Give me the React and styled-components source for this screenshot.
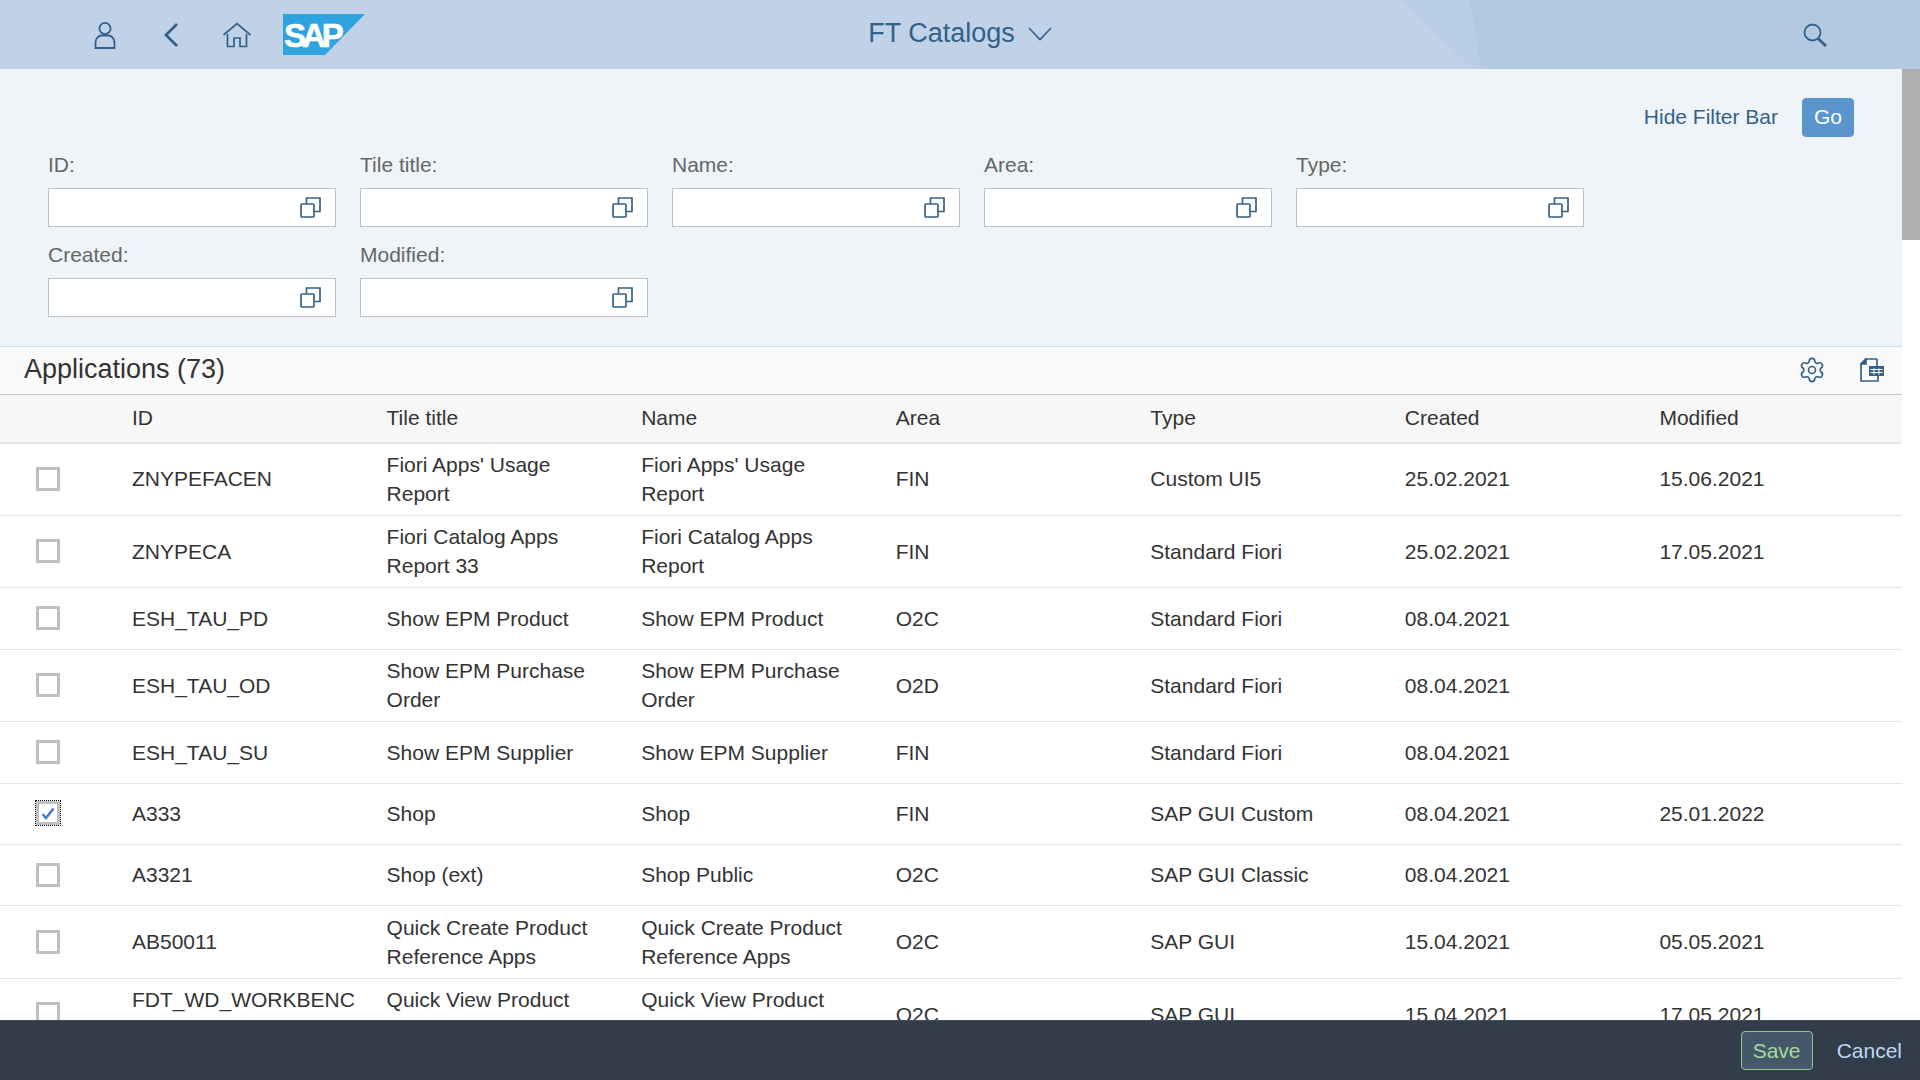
import React from 'react';
import styled, { createGlobalStyle } from 'styled-components';
import { Settings } from 'lucide-react';

const GlobalStyle = createGlobalStyle`
  html, body { margin: 0; padding: 0; height: 100%; overflow: hidden; }
  body { font-family: "Liberation Sans", Arial, sans-serif; font-size: 21px; color: #333; background: #fff; }
`;

const Page = styled.div`
  height: 100vh;
  display: flex;
  flex-direction: column;
`;

const Header = styled.header`
  position: relative;
  height: 69px;
  flex: none;
  background: linear-gradient(90deg, #bfd2e8 0%, #bfd2e8 70%, #bed1e7 100%);
  display: grid;
  grid-template-columns: 1fr auto 1fr;
  align-items: center;
  overflow: hidden;

  &::before {
    content: '';
    position: absolute;
    inset: 0;
    background: #b9cde5;
    clip-path: polygon(1402px 0, 1473px 100%, 1481px 100%, 1470px 0);
  }
  &::after {
    content: '';
    position: absolute;
    inset: 0;
    background: #b3c9e2;
    clip-path: polygon(1470px 0, 1481px 100%, 100% 100%, 100% 0);
  }
`;

const HeaderLeft = styled.div`
  position: relative;
  z-index: 1;
  display: flex;
  align-items: center;
  padding-left: 94px;
  height: 100%;
`;

const HeaderCenter = styled.div`
  position: relative;
  z-index: 1;
  display: flex;
  align-items: center;
  gap: 13px;
  color: #346187;
  font-size: 27px;
  margin-top: -2px;
`;

const HeaderRight = styled.div`
  position: relative;
  z-index: 1;
  display: flex;
  justify-content: flex-end;
  padding-right: 93px;
`;

const NavIcon = styled.svg`
  display: block;
  flex: none;
  margin-left: ${p => p.$gap || 0}px;
  fill: none;
  stroke: #346187;
`;

const Middle = styled.div`
  flex: 1;
  min-height: 0;
  display: flex;
  overflow: hidden;
`;

const Content = styled.main`
  flex: 1;
  min-width: 0;
  overflow: hidden;
`;

const ScrollTrack = styled.div`
  width: 18px;
  flex: none;
  background: #fff;
`;

const ScrollThumb = styled.div`
  height: 171px;
  background: #afafaf;
`;

const FilterBar = styled.section`
  background: #eff4f9;
  padding: 29px 48px 29px;
  height: 277px;
  box-sizing: border-box;
`;

const FilterActions = styled.div`
  display: flex;
  justify-content: flex-end;
  align-items: center;
  gap: 24px;
  height: 39px;
`;

const HideLink = styled.a`
  color: #346187;
  margin-top: -2px;
`;

const GoButton = styled.button`
  width: 52px;
  height: 39px;
  padding: 0 0 2px;
  border: 1px solid #5a96cd;
  border-radius: 4px;
  background: #5a96cd;
  color: #fff;
  font: inherit;
`;

const FilterGrid = styled.div`
  display: grid;
  grid-template-columns: repeat(5, 288px);
  column-gap: 24px;
  row-gap: 13px;
  margin-top: 13px;
`;

const FieldLabel = styled.label`
  display: block;
  line-height: 30px;
  margin-bottom: 8px;
  color: #666;
`;

const InputBox = styled.div`
  height: 39px;
  box-sizing: border-box;
  border: 1px solid #bfc1c4;
  background: #fff;
  display: flex;
  align-items: center;
  justify-content: flex-end;
  padding-right: 14px;
`;

const TitleBar = styled.div`
  height: 49px;
  box-sizing: border-box;
  background: #fafafa;
  border-top: 1px solid #cfdeef;
  border-bottom: 1px solid #c9c9c9;
  display: flex;
  align-items: center;
  justify-content: space-between;
  padding: 0 18px 0 24px;
`;

const TableTitle = styled.h2`
  margin: -3px 0 0;
  font-size: 27px;
  font-weight: 400;
  color: #333;
`;

const TitleTools = styled.div`
  display: flex;
  align-items: center;
  gap: 34px;
  margin-top: -1px;
  color: #346187;
`;

const HeadRow = styled.div`
  display: grid;
  grid-template-columns: 120px repeat(7, 1fr);
  align-items: center;
  height: 48.6px;
  box-sizing: border-box;
  padding-bottom: 2px;
  background: #f7f7f7;
  border-bottom: 2px solid #e5e5e5;
`;

const Row = styled.div`
  display: grid;
  grid-template-columns: 120px repeat(7, 1fr);
  align-items: center;
  min-height: 61.4px;
  box-sizing: border-box;
  padding: 6.4px 0 7px;
  border-bottom: 1px solid #e5e5e5;
  background: #fff;
`;

const Cell = styled.div`
  padding: 0 12px;
  line-height: 29px;
  color: #333;
  overflow-wrap: anywhere;
`;

const SelectCell = styled.div`
  padding-left: 36px;
`;

const Check = styled.span`
  display: flex;
  align-items: center;
  justify-content: center;
  width: 24px;
  height: 24px;
  box-sizing: border-box;
  border: 3px solid #bfbfbf;
  background: #fff;
  outline: ${p => (p.$checked ? '1px dotted #000' : 'none')};
`;

const Footer = styled.footer`
  height: 60px;
  flex: none;
  box-sizing: border-box;
  background: #323d49;
  border-top: 1px solid #3f5164;
  display: flex;
  align-items: center;
  justify-content: flex-end;
  gap: 24px;
  padding-right: 18px;
`;

const SaveButton = styled.button`
  width: 72px;
  height: 39px;
  padding: 0;
  border: 1px solid #8fc48d;
  border-radius: 4px;
  background: #455869;
  color: #a3d8a0;
  font: inherit;
`;

const CancelLink = styled.a`
  color: #bcd8f3;
`;

const LogoMark = styled.svg`
  display: block;
  flex: none;
  margin-left: 31px;
`;

const LogoText = styled.text`
  font-family: "Liberation Sans", Arial, sans-serif;
  font-weight: 700;
  font-size: 33px;
  letter-spacing: -4px;
  fill: #fff;
  stroke: #fff;
  stroke-width: 0.6px;
`;

const CheckSvg = styled.svg`
  display: block;
`;

const filters = ['ID', 'Tile title', 'Name', 'Area', 'Type', 'Created', 'Modified'];

const rows = [
  { id: 'ZNYPEFACEN', title: "Fiori Apps' Usage Report", name: "Fiori Apps' Usage Report", area: 'FIN', type: 'Custom UI5', created: '25.02.2021', modified: '15.06.2021' },
  { id: 'ZNYPECA', title: 'Fiori Catalog Apps Report 33', name: 'Fiori Catalog Apps Report', area: 'FIN', type: 'Standard Fiori', created: '25.02.2021', modified: '17.05.2021' },
  { id: 'ESH_TAU_PD', title: 'Show EPM Product', name: 'Show EPM Product', area: 'O2C', type: 'Standard Fiori', created: '08.04.2021', modified: '' },
  { id: 'ESH_TAU_OD', title: 'Show EPM Purchase Order', name: 'Show EPM Purchase Order', area: 'O2D', type: 'Standard Fiori', created: '08.04.2021', modified: '' },
  { id: 'ESH_TAU_SU', title: 'Show EPM Supplier', name: 'Show EPM Supplier', area: 'FIN', type: 'Standard Fiori', created: '08.04.2021', modified: '' },
  { id: 'A333', title: 'Shop', name: 'Shop', area: 'FIN', type: 'SAP GUI Custom', created: '08.04.2021', modified: '25.01.2022', checked: true },
  { id: 'A3321', title: 'Shop (ext)', name: 'Shop Public', area: 'O2C', type: 'SAP GUI Classic', created: '08.04.2021', modified: '' },
  { id: 'AB50011', title: 'Quick Create Product Reference Apps', name: 'Quick Create Product Reference Apps', area: 'O2C', type: 'SAP GUI', created: '15.04.2021', modified: '05.05.2021' },
  { id: 'FDT_WD_WORKBENCH', title: 'Quick View Product Reference Apps', name: 'Quick View Product Reference Apps', area: 'O2C', type: 'SAP GUI', created: '15.04.2021', modified: '17.05.2021' },
];

function PersonIcon() {
  return (
    <NavIcon width="22" height="28" viewBox="0 0 22 28" strokeWidth="1.8">
      <circle cx="11" cy="7.5" r="5.6" />
      <path d="M1.5 27V21.5C1.5 17 5 14.5 7.5 14.5H14.5C17 14.5 20.5 17 20.5 21.5V27Z" />
    </NavIcon>
  );
}

function BackIcon() {
  return (
    <NavIcon $gap={47} width="16" height="26" viewBox="0 0 16 26" strokeWidth="2.8">
      <path d="M14 2L3 13L14 24" />
    </NavIcon>
  );
}

function HomeIcon() {
  return (
    <NavIcon $gap={43} width="30" height="26" viewBox="0 0 30 26" strokeWidth="1.7">
      <path d="M1.5 13L15 1.5L28.5 13" />
      <path d="M5.5 12V24.5H12V16H18V24.5H24.5V12" />
    </NavIcon>
  );
}

function SapLogo() {
  return (
    <LogoMark width="82" height="41" viewBox="0 0 82 41">
      <polygon points="0,0 82,0 42,41 0,41" fill="#2fa3e0" />
      <LogoText x="1" y="33">SAP</LogoText>
    </LogoMark>
  );
}

function ChevronDown() {
  return (
    <NavIcon width="24" height="14" viewBox="0 0 24 14" strokeWidth="1.6">
      <path d="M1 1L12 12.5L23 1" />
    </NavIcon>
  );
}

function SearchIcon() {
  return (
    <NavIcon width="24" height="24" viewBox="0 0 24 24" strokeWidth="1.8">
      <circle cx="9.5" cy="9.5" r="8" />
      <path d="M15 15.5L23 23" strokeWidth="2.8" />
    </NavIcon>
  );
}

function ValueHelpIcon() {
  return (
    <NavIcon width="21" height="21" viewBox="0 0 21 21" strokeWidth="1.7">
      <rect x="1" y="7" width="13" height="13" rx="1" />
      <path d="M6.5 6.5V1H20V14.5H14.5" />
    </NavIcon>
  );
}

function ExportIcon() {
  return (
    <NavIcon width="24" height="24" viewBox="0 0 24 24" strokeWidth="1.7">
      <path d="M17 1H6L1 6V23H18V18" />
      <path d="M1 6L6 1V6Z" fill="#346187" />
      <path d="M17 1V8" />
      <rect x="9" y="8" width="15" height="10" fill="#346187" strokeWidth="0" />
      <path d="M14 10.5V16.5M19 10.5V16.5M10.5 11.5H22.5M10.5 14.5H22.5" stroke="#fafafa" strokeWidth="1.1" />
    </NavIcon>
  );
}

function CheckMark() {
  return (
    <CheckSvg width="14" height="13" viewBox="0 0 14 13">
      <path d="M1.5 7L5 11L12.5 1.5" fill="none" stroke="#3f7fbd" strokeWidth="2.4" />
    </CheckSvg>
  );
}

function TableRow({ row }) {
  return (
    <Row>
      <SelectCell>
        <Check $checked={row.checked}>{row.checked && <CheckMark />}</Check>
      </SelectCell>
      <Cell>{row.id}</Cell>
      <Cell>{row.title}</Cell>
      <Cell>{row.name}</Cell>
      <Cell>{row.area}</Cell>
      <Cell>{row.type}</Cell>
      <Cell>{row.created}</Cell>
      <Cell>{row.modified}</Cell>
    </Row>
  );
}

export default function App() {
  return (
    <Page>
      <GlobalStyle />
      <Header>
        <HeaderLeft>
          <PersonIcon />
          <BackIcon />
          <HomeIcon />
          <SapLogo />
        </HeaderLeft>
        <HeaderCenter>
          FT Catalogs
          <ChevronDown />
        </HeaderCenter>
        <HeaderRight>
          <SearchIcon />
        </HeaderRight>
      </Header>
      <Middle>
        <Content>
          <FilterBar>
            <FilterActions>
              <HideLink>Hide Filter Bar</HideLink>
              <GoButton>Go</GoButton>
            </FilterActions>
            <FilterGrid>
              {filters.map(f => (
                <div key={f}>
                  <FieldLabel>{f}:</FieldLabel>
                  <InputBox>
                    <ValueHelpIcon />
                  </InputBox>
                </div>
              ))}
            </FilterGrid>
          </FilterBar>
          <TitleBar>
            <TableTitle>Applications (73)</TableTitle>
            <TitleTools>
              <Settings size={28} strokeWidth={1.4} />
              <ExportIcon />
            </TitleTools>
          </TitleBar>
          <HeadRow>
            <div />
            {filters.map(f => (
              <Cell key={f}>{f}</Cell>
            ))}
          </HeadRow>
          {rows.map(r => (
            <TableRow key={r.id} row={r} />
          ))}
        </Content>
        <ScrollTrack>
          <ScrollThumb />
        </ScrollTrack>
      </Middle>
      <Footer>
        <SaveButton>Save</SaveButton>
        <CancelLink>Cancel</CancelLink>
      </Footer>
    </Page>
  );
}
